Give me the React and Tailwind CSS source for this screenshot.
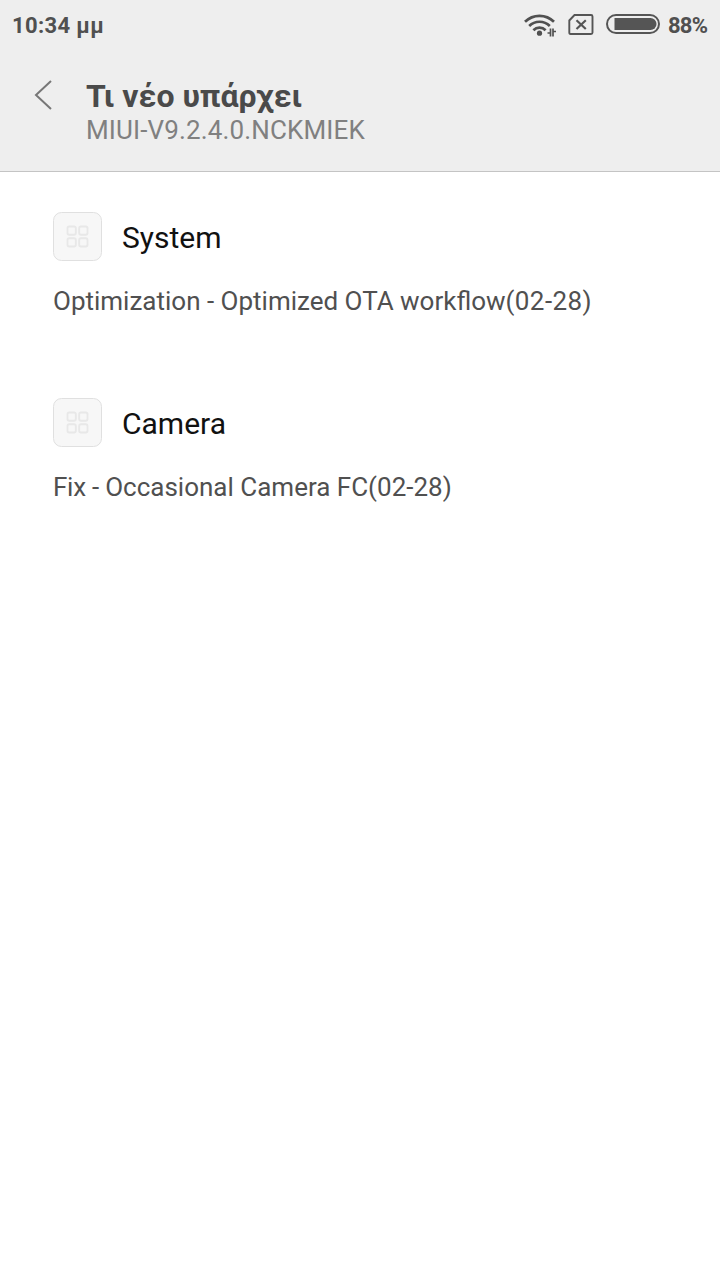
function Battery() {
  return (
    <svg width="54" height="20" viewBox="0 0 54 20" fill="none" aria-hidden="true">
      <rect x="1" y="1" width="52" height="18" rx="9" stroke="#555" strokeWidth="2" />
      <path d="M8.500 4H44.500A6 6 0 0 1 44.500 16H8.500Z" fill="#555" />
    </svg>
  );
}

function Wifi() {
  return (
    <svg width="32" height="24" viewBox="0 0 32 24" fill="none" stroke="#505050" aria-hidden="true">
      <path d="M1 8.800A20.500 20.500 0 0 1 30 8.800" strokeWidth="2.7" />
      <path d="M5.200 13A14.600 14.600 0 0 1 25.800 13" strokeWidth="2.7" />
      <path d="M9.400 17.200A8.600 8.600 0 0 1 21.600 17.200" strokeWidth="2.7" />
      <circle cx="15.500" cy="20.200" r="2.600" fill="#505050" stroke="none" />
      <path d="M26.500 15.500V23.500M26 20H23.500M29 15.500V23.500M29.500 18.500H32" strokeWidth="1.7" />
    </svg>
  );
}

function NoSim() {
  return (
    <svg width="26" height="22" viewBox="0 0 26 22" fill="none" stroke="#555" aria-hidden="true">
      <path d="M6.500 1H23Q24.500 1 24.500 2.500V18.500Q24.500 20 23 20H2.500Q1.300 20 1.300 18.500V6.500Z" strokeWidth="1.9" />
      <path d="M8.500 6.300L17.800 15M17.800 6.300L8.500 15" strokeWidth="2.2" />
    </svg>
  );
}

function AppIcon() {
  return (
    <svg width="49" height="49" viewBox="0 0 49 49" fill="none" aria-hidden="true">
      <rect x=".5" y=".5" width="48" height="48" rx="8" fill="#f7f7f7" stroke="#e0e0e0" />
      <g stroke="#e8e8e8" strokeWidth="1.9">
        <rect x="14.500" y="14.500" width="8.300" height="8.300" rx="1.7" />
        <rect x="26.200" y="14.500" width="8.300" height="8.300" rx="1.7" />
        <rect x="14.500" y="26.200" width="8.300" height="8.300" rx="1.7" />
        <rect x="26.200" y="26.200" width="8.300" height="8.300" rx="1.7" />
      </g>
    </svg>
  );
}

function Change({ title, children }) {
  return (
    <section className="h-[186px] pl-[53px]">
      <div className="flex items-center gap-5">
        <AppIcon />
        <h2 className="pt-[2px] text-[30px] leading-[36px] text-[#111]">{title}</h2>
      </div>
      {children}
    </section>
  );
}

export default function App() {
  return (
    <div className="min-h-screen bg-white font-[Roboto,sans-serif]">
      <header className="h-[172px] border-b border-[#c4c4c4] bg-[#eeeeee]">
        <div className="flex h-[50px] items-center pl-[12px] pr-[13px] text-[22px] font-bold text-[#505050]">
          <span className="tracking-[0.35px]">10:34 μμ</span>
          <div className="ml-auto flex items-center">
            <Wifi />
            <div className="ml-[12px]"><NoSim /></div>
            <div className="ml-[12px] -mt-[2px]"><Battery /></div>
            <span className="ml-[8px] w-[39px] whitespace-nowrap tracking-[-0.8px]">88%</span>
          </div>
        </div>
        <div className="flex pt-[28px]">
          <svg className="ml-[34px] mr-[34px] mt-[2px]" width="18" height="30" viewBox="0 0 18 30" fill="none" stroke="#777" strokeWidth="2" aria-hidden="true">
            <path d="M17 1L2 15L17 29" />
          </svg>
          <div>
            <h1 className="text-[32px] font-bold leading-[37px] text-[#4a4a4a]">Τι νέο υπάρχει</h1>
            <p className="text-[26px] leading-[30px] tracking-[0.14px] text-[#808080]">MIUI-V9.2.4.0.NCKMIEK</p>
          </div>
        </div>
      </header>
      <main className="pt-[40px]">
        <Change title="System">
          <p className="mt-[24px] text-[26px] leading-[32px] text-[#505050]">
            Optimization - Optimized OTA workflow<span className="tracking-[0.4px]">(02-28)</span>
          </p>
        </Change>
        <Change title="Camera">
          <p className="mt-[24px] text-[26px] leading-[32px] text-[#505050]">
            <span className="tracking-[-0.25px]">Fix - </span>Occasional Camera FC(02-28)
          </p>
        </Change>
      </main>
    </div>
  );
}
